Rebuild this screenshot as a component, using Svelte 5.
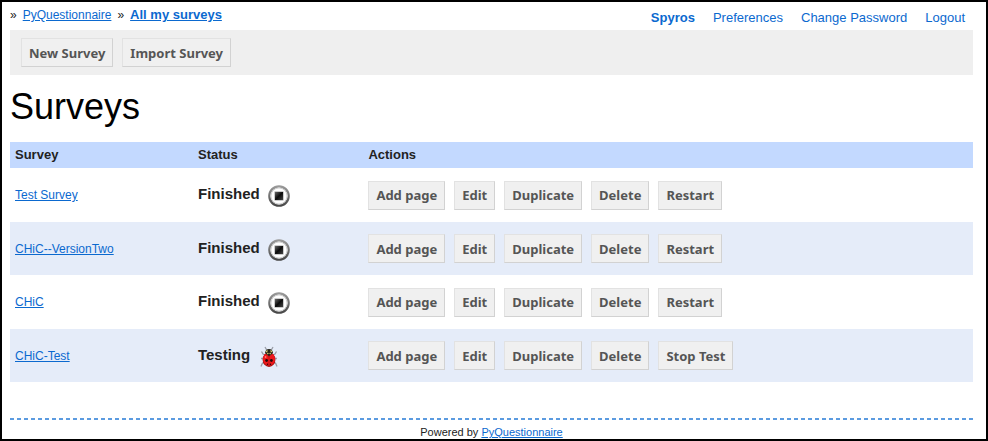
<script>
  const account = ['Spyros', 'Preferences', 'Change Password', 'Logout'];
  const surveys = [
    { name: 'Test Survey', status: 'Finished' },
    { name: 'CHiC--VersionTwo', status: 'Finished' },
    { name: 'CHiC', status: 'Finished' },
    { name: 'CHiC-Test', status: 'Testing' }
  ];
  const actions = ['Add page', 'Edit', 'Duplicate', 'Delete'];
</script>

<div class="frame">
  <header>
    <nav class="crumbs" aria-label="Breadcrumb">
      <span>»</span>
      <a href="#home">PyQuestionnaire</a>
      <span>»</span>
      <a class="current" href="#surveys">All my surveys</a>
    </nav>
    <nav class="account" aria-label="Account">
      {#each account as item}
        <a href="#account">{item}</a>
      {/each}
    </nav>
  </header>

  <div class="toolbar">
    <button type="button">New Survey</button>
    <button type="button">Import Survey</button>
  </div>

  <main>
    <h1>Surveys</h1>
    <table>
      <thead>
        <tr><th class="name">Survey</th><th class="state">Status</th><th>Actions</th></tr>
      </thead>
      <tbody>
        {#each surveys as survey}
          <tr>
            <td><a href="#survey">{survey.name}</a></td>
            <td>
              <div class="status">
                <span>{survey.status}</span>
                {#if survey.status === 'Finished'}
                  <svg width="24" height="24" viewBox="0 0 24 24" aria-hidden="true">
                    <defs>
                      <linearGradient id="ring" x1="0" y1="0" x2="0" y2="1">
                        <stop offset="0" stop-color="#999" />
                        <stop offset="1" stop-color="#484848" />
                      </linearGradient>
                      <linearGradient id="stop" x1="0" y1="0" x2="1" y2="1">
                        <stop offset="0" stop-color="#666" />
                        <stop offset=".5" stop-color="#0c0c0c" />
                        <stop offset="1" stop-color="#444" />
                      </linearGradient>
                    </defs>
                    <circle cx="12" cy="12" r="9.7" fill="#fff" stroke="url(#ring)" stroke-width="2.2" />
                    <circle cx="12" cy="12" r="8.1" fill="none" stroke="#ccc" stroke-width="1" />
                    <rect x="7.5" y="7.5" width="9" height="9" fill="#999" />
                    <rect x="8" y="8" width="8" height="8" fill="url(#stop)" />
                  </svg>
                {:else}
                  <svg width="24" height="24" viewBox="0 0 24 24" aria-hidden="true">
                    <g fill="none" stroke="#9a9ea8" stroke-width="1.3">
                      <path d="M8 2 L9.7 5 M16 2 L14.3 5" />
                      <path d="M4.5 6.5 L6 9 L8 10 M19.5 6.5 L18 9 L16 10" />
                      <path d="M4 13.5 H7 M20 13.5 H17" />
                      <path d="M7 17 L5.3 18.5 L4 21.5 M17 17 L18.7 18.5 L20 21.5" />
                    </g>
                    <ellipse cx="12" cy="14.7" rx="6.4" ry="7.2" fill="#a80f12" />
                    <ellipse cx="12" cy="14.2" rx="6" ry="6.6" fill="#ee171b" />
                    <path d="M8 8 Q8.5 4 12 4 Q15.5 4 16 8 L14 9.8 L12 11.5 L10 9.8Z" fill="#24241a" />
                    <path d="M9 7 L10.5 5.5 M15 7 L13.5 5.5 M10.3 9 L11.3 8 M13.7 9 L12.7 8" stroke="#d6c66e" stroke-width="1.3" />
                    <path d="M12 10 V21" stroke="#a80f12" stroke-width=".6" />
                    <g fill="#2a080a">
                      <circle cx="9.6" cy="15.5" r="1.4" /><circle cx="14.4" cy="15.5" r="1.4" />
                      <circle cx="10.5" cy="19.3" r=".7" /><circle cx="13.5" cy="19.3" r=".7" />
                    </g>
                    <circle cx="8.6" cy="12" r=".9" fill="#ff8070" />
                  </svg>
                {/if}
              </div>
            </td>
            <td>
              <div class="actions">
                {#each actions as action}
                  <button type="button">{action}</button>
                {/each}
                <button type="button">{survey.status === 'Testing' ? 'Stop Test' : 'Restart'}</button>
              </div>
            </td>
          </tr>
        {/each}
      </tbody>
    </table>
  </main>

  <footer>Powered by <a href="#about">PyQuestionnaire</a></footer>
</div>

<style>
  .frame {
    box-sizing: border-box;
    min-height: 100vh;
    border: 2px solid #000;
    padding: 0 13px 0 8px;
    background: #fff;
    color: #222;
    font: 12px/16px "Liberation Sans", Arial, sans-serif;
  }
  a { color: #0b69cf; }
  header {
    display: flex;
    justify-content: space-between;
    height: 28px;
  }
  .crumbs {
    display: flex;
    gap: 6px;
    padding-top: 5px;
  }
  .current { font-size: 13px; font-weight: bold; }
  .account {
    display: flex;
    gap: 18px;
    padding: 8px 8px 0 0;
    font-size: 13px;
  }
  .account a { text-decoration: none; }
  .account a:first-child { font-weight: bold; }
  .toolbar {
    display: flex;
    gap: 9px;
    padding: 8px 11px;
    background: #efefef;
  }
  button {
    box-sizing: border-box;
    height: 29px;
    margin: 0;
    padding: 0 7px;
    border: 1px solid;
    border-color: #e2e2e2 #d2d2d2 #d2d2d2 #e2e2e2;
    border-radius: 0;
    background: #f0f0f0;
    color: #555;
    font: bold 13px/16px "Noto Sans", "Open Sans", sans-serif;
    white-space: nowrap;
  }
  h1 {
    margin: 11px 0 14px;
    color: #000;
    font-size: 36px;
    font-weight: normal;
    line-height: 42px;
  }
  table {
    width: 100%;
    border-collapse: collapse;
    table-layout: fixed;
  }
  th {
    height: 26px;
    padding: 0 5px;
    background: #c3d9ff;
    font-size: 13px;
    text-align: left;
  }
  .name { width: 19%; }
  .state { width: 17.7%; }
  th, td { box-sizing: border-box; }
  td {
    height: 54px;
    padding: 0 5px;
  }
  tbody tr:nth-child(even) { background: #e5ecf9; }
  tbody tr:nth-child(even) td { height: 53px; }
  .status {
    display: flex;
    align-items: center;
    gap: 7px;
    padding-top: 2px;
    font-size: 15px;
    font-weight: bold;
  }
  .status span { padding-bottom: 4px; }
  .actions { display: flex; gap: 9px; }
  footer {
    margin-top: 36px;
    padding-top: 7px;
    background: repeating-linear-gradient(90deg, #5b9be0 0 4px, transparent 4px 7px) top / 100% 2px no-repeat;
    font-size: 11px;
    line-height: 14px;
    text-align: center;
  }
</style>
